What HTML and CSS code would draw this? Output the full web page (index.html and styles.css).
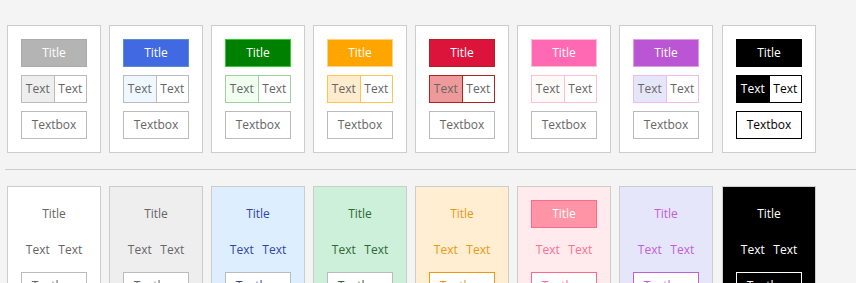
FILE: index.html
```html
<!DOCTYPE html>
<html>
<head>
<meta charset="utf-8">
<link rel="stylesheet" href="styles.css">
</head>
<body>
<div class="page">
  <div class="row">
    <div class="card t-gray"><div class="title">Title</div><div class="pair"><div class="cell">Text</div><div class="cell">Text</div></div><div class="textbox">Textbox</div></div>
    <div class="card t-blue"><div class="title">Title</div><div class="pair"><div class="cell">Text</div><div class="cell">Text</div></div><div class="textbox">Textbox</div></div>
    <div class="card t-green"><div class="title">Title</div><div class="pair"><div class="cell">Text</div><div class="cell">Text</div></div><div class="textbox">Textbox</div></div>
    <div class="card t-orange"><div class="title">Title</div><div class="pair"><div class="cell">Text</div><div class="cell">Text</div></div><div class="textbox">Textbox</div></div>
    <div class="card t-red"><div class="title">Title</div><div class="pair"><div class="cell">Text</div><div class="cell">Text</div></div><div class="textbox">Textbox</div></div>
    <div class="card t-pink"><div class="title">Title</div><div class="pair"><div class="cell">Text</div><div class="cell">Text</div></div><div class="textbox">Textbox</div></div>
    <div class="card t-purple"><div class="title">Title</div><div class="pair"><div class="cell">Text</div><div class="cell">Text</div></div><div class="textbox">Textbox</div></div>
    <div class="card t-black"><div class="title">Title</div><div class="pair"><div class="cell">Text</div><div class="cell">Text</div></div><div class="textbox">Textbox</div></div>
  </div>
  <hr class="rule">
  <div class="row">
    <div class="card s-white"><div class="title">Title</div><div class="pair"><div class="cell">Text</div><div class="cell">Text</div></div><div class="textbox">Textbox</div></div>
    <div class="card s-gray"><div class="title">Title</div><div class="pair"><div class="cell">Text</div><div class="cell">Text</div></div><div class="textbox">Textbox</div></div>
    <div class="card s-blue"><div class="title">Title</div><div class="pair"><div class="cell">Text</div><div class="cell">Text</div></div><div class="textbox">Textbox</div></div>
    <div class="card s-green"><div class="title">Title</div><div class="pair"><div class="cell">Text</div><div class="cell">Text</div></div><div class="textbox">Textbox</div></div>
    <div class="card s-orange"><div class="title">Title</div><div class="pair"><div class="cell">Text</div><div class="cell">Text</div></div><div class="textbox">Textbox</div></div>
    <div class="card s-pink"><div class="title">Title</div><div class="pair"><div class="cell">Text</div><div class="cell">Text</div></div><div class="textbox">Textbox</div></div>
    <div class="card s-purple"><div class="title">Title</div><div class="pair"><div class="cell">Text</div><div class="cell">Text</div></div><div class="textbox">Textbox</div></div>
    <div class="card s-black"><div class="title">Title</div><div class="pair"><div class="cell">Text</div><div class="cell">Text</div></div><div class="textbox">Textbox</div></div>
  </div>
</div>
</body>
</html>
```
FILE: styles.css
```css
html, body {
  margin: 0;
  padding: 0;
  background: #f4f4f4;
  font-family: "Open Sans", "Liberation Sans", sans-serif;
  font-size: 12px;
  color: #666;
  overflow: hidden;
}
.page {
  padding: 25px 0 0 5px;
}
.row {
  display: flex;
  gap: 8px;
  padding-left: 2px;
}
.rule {
  border: 0;
  border-top: 1px solid #ccc;
  margin: 16px 0 16px 0;
  height: 0;
}
.card {
  width: 94px;
  box-sizing: border-box;
  border: 1px solid #ccc;
  background: #fff;
  padding: 13px;
  display: flex;
  flex-direction: column;
  gap: 8px;
  flex: none;
}
.card:last-child {
  margin-left: 1px;
}
.title, .pair, .textbox {
  height: 28px;
  box-sizing: border-box;
  border: 1px solid #bbb;
  display: flex;
  align-items: center;
  justify-content: center;
  line-height: 1;
  padding-bottom: 1px;
}
.title {
  color: #fff;
}
.pair {
  justify-content: stretch;
  padding-bottom: 0;
}
.cell {
  flex: 1;
  height: 100%;
  display: flex;
  align-items: center;
  justify-content: center;
  padding-bottom: 1px;
  box-sizing: border-box;
}
.cell:first-child {
  border-right: 1px solid #bbb;
}

/* row 1 themes */
.t-gray .title { background: #b4b4b4; border-color: #aaa; }
.t-gray .cell:first-child { background: #eee; }

.t-blue .title { background: #4169e1; border-color: #5b8fc2; }
.t-blue .cell:first-child { background: #f0f8ff; }

.t-green .title { background: #008000; border-color: #32cd32; }
.t-green .pair { border-color: #a3cfa3; }
.t-green .cell:first-child { background: #f0fff0; border-color: #a3cfa3; }

.t-orange .title { background: #ffa500; border-color: #ffd27f; }
.t-orange .pair { border-color: #ffc44d; }
.t-orange .cell:first-child { background: #ffebcd; border-color: #ffc44d; }

.t-red .title { background: #dc143c; border-color: #b22222; }
.t-red .pair { border-color: #b22222; }
.t-red .cell:first-child { background: #ef9a9a; border-color: #b22222; }

.t-pink .title { background: #ff69b4; border-color: #ffc0cb; }
.t-pink .pair { border-color: #ffc0cb; }
.t-pink .cell:first-child { background: #fffafa; border-color: #ffc0cb; }

.t-purple .title { background: #ba55d3; border-color: #dda0dd; }
.t-purple .pair { border-color: #eebbee; }
.t-purple .cell:first-child { background: #e6e6fa; border-color: #eebbee; }

.t-black .title { background: #000; border-color: #000; }
.t-black .pair { border-color: #000; color: #000; }
.t-black .cell:first-child { background: #000; color: #fff; border-color: #000; }
.t-black .textbox { border-color: #000; color: #000; }

/* row 2 themes */
.card[class*="s-"] .title,
.card[class*="s-"] .pair,
.card[class*="s-"] .cell:first-child { border-color: transparent; background: transparent; }
.card[class*="s-"] .title { color: inherit; }
.card[class*="s-"] .textbox { background: #fff; }

.s-white { background: #fff; color: #666; }
.s-gray { background: #eee; color: #666; }
.s-blue { background: #ddeeff; color: #3344aa; }
.s-green { background: #ccf0d9; color: #336633; }
.s-orange { background: #ffeed2; color: #e89a10; }
.s-orange .textbox { border-color: #eb9a10; }
.s-pink { background: #ffebee; color: #ff6f8f; }
.card.s-pink .title { background: #ff94a6; border-color: #ff6a8a; color: #fff; }
.s-pink .textbox { border-color: #ff6a8a; }
.s-purple { background: #e6e6fa; color: #c060d8; }
.s-purple .textbox { border-color: #c060d8; }
.s-black { background: #000; color: #fff; }
.card.s-black .textbox { background: #000; border-color: #fff; color: #fff; }
```
